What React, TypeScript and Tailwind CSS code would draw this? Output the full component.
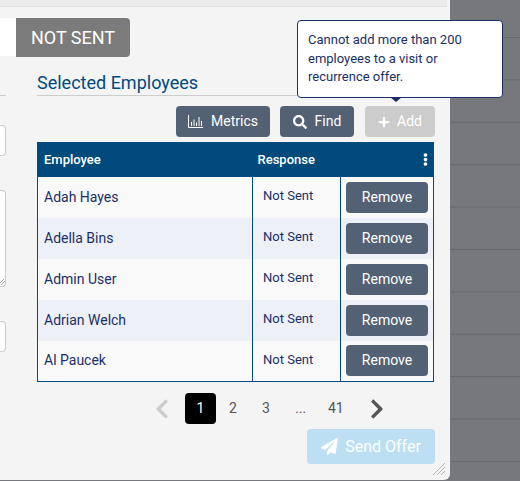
import React from "react";
import { FaSearch, FaPlus, FaPaperPlane, FaEllipsisV, FaChevronLeft, FaChevronRight } from "react-icons/fa";

const rows = ["Adah Hayes", "Adella Bins", "Admin User", "Adrian Welch", "Al Paucek"];

function Field({ className }: { className: string }) {
  return <div className={"w-[6px] bg-white border border-l-0 border-[#cccccc] rounded-r-[4px] " + className} />;
}

function MetricsIcon() {
  return (
    <svg width="15" height="13" viewBox="0 0 15 13" fill="none" stroke="white" strokeWidth="1">
      <path d="M.5 0v12.5H15" />
      <path d="M3.5 7v4M6 4.5V11M8.5 7.5V11M11 2v9M13.5 6v5" />
    </svg>
  );
}

export default function App() {
  return (
    <div className="relative flex h-[481px] w-[520px] overflow-hidden bg-[#77787c] bg-[linear-gradient(to_bottom,#66676b_1px,transparent_1px)] bg-[length:100%_42.4px] bg-[position:0_37px] font-['Roboto',sans-serif]">
      <div className="relative flex h-[480px] w-[450px] flex-col rounded-br-[6px] bg-[#f4f4f4]">
        <div className="h-[7px] w-[447px] border-b border-[#dedede] bg-[#ebebeb]" />
        <div className="mt-[11px] flex h-[39px]">
          <div className="h-[38px] w-[16px] bg-white" />
          <div className="flex h-[39px] w-[114px] items-center justify-center rounded-r-[4px] bg-[#7b7b7b] text-[18px] text-white">
            NOT SENT
          </div>
        </div>
        <div className="flex flex-1">
          <div className="flex w-[37px] flex-col">
            <div className="mt-[38px] h-px w-[6px] bg-[#cccccc]" />
            <Field className="mt-[29px] h-[31px]" />
            <div className="relative mt-[34px]">
              <Field className="h-[97px]" />
              <svg className="absolute left-0 top-[87px]" width="5" height="8" viewBox="0 0 5 8" stroke="#888" strokeWidth="0.8">
                <path d="M0 6L4 2M1 8L5 4" />
              </svg>
            </div>
            <Field className="mt-[34px] h-[31px]" />
          </div>
          <div className="flex w-[398px] flex-col">
            <h2 className="mt-[14px] h-[24px] w-[397px] border-b border-[#cccccc] text-[18px] leading-[24px] text-[#004a7c] box-content">
              Selected Employees
            </h2>
            <div className="mt-[10px] flex justify-end gap-[10px] text-[14px] text-white">
              <button className="flex h-[31px] w-[94px] items-center justify-center gap-[8px] rounded-[4px] bg-[#526173]">
                <MetricsIcon />
                Metrics
              </button>
              <button className="flex h-[31px] w-[74px] items-center justify-center gap-[8px] rounded-[4px] bg-[#526173]">
                <FaSearch className="text-[14px]" />
                Find
              </button>
              <button className="ml-px flex h-[31px] w-[70px] items-center justify-center gap-[7px] rounded-[4px] bg-[#cccccc]">
                <FaPlus className="text-[12px]" />
                Add
              </button>
            </div>
            <table className="mt-[5px] w-[397px] table-fixed border-collapse border border-[#004a7c] text-[14px] text-[#1b2f66]">
              <thead>
                <tr className="h-[34px] bg-[#004a7c] text-left text-[13px] font-bold text-white">
                  <th className="w-[215px] pl-[6px] font-medium">Employee</th>
                  <th className="w-[88px] pl-[5px] font-medium">Response</th>
                  <th className="relative">
                    <FaEllipsisV className="absolute right-[1px] top-[10px] text-[13px]" />
                  </th>
                </tr>
              </thead>
              <tbody>
                {rows.map((name, i) => (
                  <tr key={name} className={"h-[41px] " + (i % 2 ? "bg-[#edf1f7]" : "bg-[#f9f9f9]")}>
                    <td className="border-r border-[#004a7c] pl-[6px]">{name}</td>
                    <td className="border-r border-[#004a7c] pb-[3px] pl-[10px] text-[13px]">Not Sent</td>
                    <td className="pl-[5px]">
                      <button className="h-[31px] w-[82px] rounded-[4px] bg-[#526173] text-[14px] text-white">Remove</button>
                    </td>
                  </tr>
                ))}
              </tbody>
            </table>
            <div className="mt-[11px] flex h-[31px] w-[397px] items-center text-[14px] text-[#555555]">
              <FaChevronLeft className="ml-[114px] text-[22px] text-[#cccccc]" />
              <div className="ml-[12px] flex h-[31px] w-[31px] items-center justify-center rounded-[4px] bg-black text-white">1</div>
              <span className="ml-[13px] w-[9px]">2</span>
              <span className="ml-[24px] w-[9px]">3</span>
              <span className="ml-[24px] w-[10px]">...</span>
              <span className="ml-[23px] w-[16px]">41</span>
              <FaChevronRight className="ml-[22px] text-[22px] text-[#555555]" />
            </div>
            <button className="ml-[270px] mt-[5px] flex h-[35px] w-[128px] items-center justify-center gap-[7px] rounded-[4px] bg-[#bcdff3] text-[16px] text-white">
              <FaPaperPlane className="text-[17px]" />
              Send Offer
            </button>
          </div>
        </div>
        <svg className="absolute bottom-[5px] right-[5px]" width="12" height="12" viewBox="0 0 12 12" stroke="#b5b5b5" strokeWidth="1">
          <path d="M0 12L12 0M4 12L12 4M8 12L12 8" />
        </svg>
      </div>
      <div className="absolute left-[297px] top-[20px] h-[78px] w-[206px] rounded-[4px] border border-[#1b2f66] bg-white px-[10px] py-[10px] text-[13px] leading-[18.6px] text-[#1b2f66]">
        Cannot add more than 200 employees to a visit or recurrence offer.
        <div className="absolute left-[92px] top-[76px] h-0 w-0 border-x-[6px] border-t-[5px] border-x-transparent border-t-[#1b2f66]" />
      </div>
    </div>
  );
}
